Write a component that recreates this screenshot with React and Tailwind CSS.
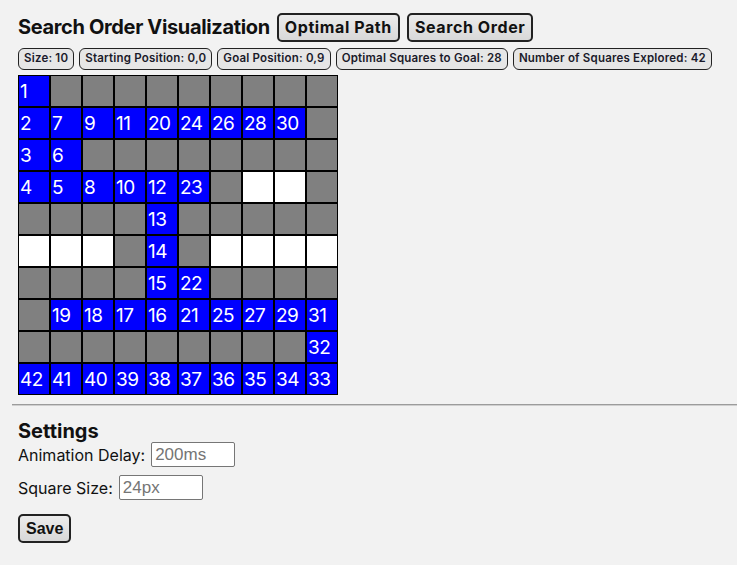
import React from 'react';

const B = 'b';
const G = 'g';
const W = 'w';

// each row: list of [type, label]
const grid = [
    [[B, 1], G, G, G, G, G, G, G, G, G],
    [[B, 2], [B, 7], [B, 9], [B, 11], [B, 20], [B, 24], [B, 26], [B, 28], [B, 30], G],
    [[B, 3], [B, 6], G, G, G, G, G, G, G, G],
    [[B, 4], [B, 5], [B, 8], [B, 10], [B, 12], [B, 23], G, W, W, G],
    [G, G, G, G, [B, 13], G, G, G, G, G],
    [W, W, W, G, [B, 14], G, W, W, W, W],
    [G, G, G, G, [B, 15], [B, 22], G, G, G, G],
    [G, [B, 19], [B, 18], [B, 17], [B, 16], [B, 21], [B, 25], [B, 27], [B, 29], [B, 31]],
    [G, G, G, G, G, G, G, G, G, [B, 32]],
    [[B, 42], [B, 41], [B, 40], [B, 39], [B, 38], [B, 37], [B, 36], [B, 35], [B, 34], [B, 33]],
];

const badges = [
    'Size: 10',
    'Starting Position: 0,0',
    'Goal Position: 0,9',
    'Optimal Squares to Goal: 28',
    'Number of Squares Explored: 42',
];

const grotesk = "font-['Inter',sans-serif]";

function Cell({ cell }) {
    const type = Array.isArray(cell) ? cell[0] : cell;
    const label = Array.isArray(cell) ? cell[1] : null;
    const bg = type === B ? 'bg-[#0000ff]' : type === W ? 'bg-white' : 'bg-[#808080]';
    return (
        <div className={`w-8 h-8 border border-black ${bg} text-white text-[19px] leading-8 tracking-[-0.5px] overflow-hidden pl-px`}>
            {label}
        </div>
    );
}

export default function App() {
    return (
        <div className={`min-h-screen bg-[#f2f2f2] text-[#111] ${grotesk}`}>
            <div className="px-[18px] pt-3">
                <div className="flex items-center gap-[7px]">
                    <h1 className="text-[20px] font-bold tracking-[-0.35px]">Search Order Visualization</h1>
                    <button className="h-[29px] px-[6px] border-2 border-[#222] rounded-[5px] bg-gradient-to-b from-[#ececec] to-[#d8d8d8] text-[16px] font-bold tracking-[0.6px]">
                        Optimal Path
                    </button>
                    <button className="h-[29px] px-[6px] border-2 border-[#222] rounded-[5px] bg-gradient-to-b from-[#ececec] to-[#d8d8d8] text-[16px] font-bold tracking-[0.6px]">
                        Search Order
                    </button>
                </div>
                <div className="flex gap-[5px] mt-[6px]">
                    {badges.map((b) => (
                        <span key={b} className="h-[22px] px-[5px] flex items-center border border-[#222] rounded-[6px] bg-[#e6e6e6] text-[11.5px] font-semibold tracking-[0.2px] text-[#1a1a2a]">
                            {b}
                        </span>
                    ))}
                </div>
                <div className="mt-[5px] w-[320px] grid grid-cols-10">
                    {grid.flatMap((row, r) =>
                        row.map((cell, c) => <Cell key={`${r}-${c}`} cell={cell} />)
                    )}
                </div>
            </div>

            <div className="ml-3 mt-[9px] border-t border-[#9c9c9c] border-b border-b-[#cfcfcf]"></div>

            <div className="px-[18px] pt-[13px]">
                <h2 className="text-[20px] font-bold leading-6">Settings</h2>
                <div className="flex items-center gap-[6px] mt-[-1px]">
                    <label className="text-[16px]">Animation Delay:</label>
                    <input
                        placeholder="200ms"
                        className="w-[84px] h-[25px] bg-white border border-[#767676] rounded-[2px] px-[3px] text-[17px] font-['Liberation_Sans',sans-serif] placeholder:text-[#757575]"
                    />
                </div>
                <div className="flex items-center gap-[6px] mt-[8px]">
                    <label className="text-[16px]">Square Size:</label>
                    <input
                        placeholder="24px"
                        className="w-[84px] h-[25px] bg-white border border-[#767676] rounded-[2px] px-[3px] text-[17px] font-['Liberation_Sans',sans-serif] placeholder:text-[#757575]"
                    />
                </div>
                <button className="mt-[14px] h-[29px] px-[6px] border-2 border-[#222] rounded-[5px] bg-gradient-to-b from-[#ececec] to-[#d8d8d8] text-[16px] font-bold font-['Liberation_Sans',sans-serif]">
                    Save
                </button>
            </div>
        </div>
    );
}
